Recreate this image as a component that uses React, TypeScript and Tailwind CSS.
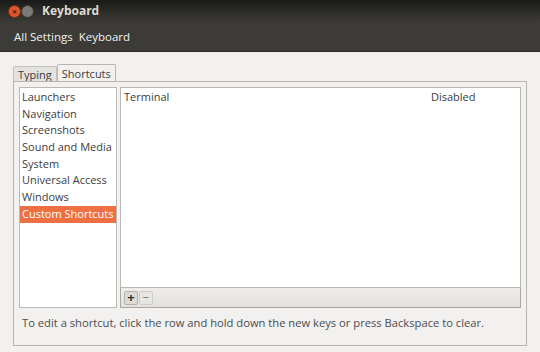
import React, { useState } from 'react';

const categories = [
  'Launchers',
  'Navigation',
  'Screenshots',
  'Sound and Media',
  'System',
  'Universal Access',
  'Windows',
  'Custom Shortcuts',
];

const App: React.FC = () => {
  const [selected, setSelected] = useState('Custom Shortcuts');
  const [tab, setTab] = useState('Shortcuts');

  return (
    <div
      className="w-[540px] h-[352px] overflow-hidden flex flex-col bg-[#f2f1f0] text-[#3c3c3c]"
      style={{ fontFamily: '"Open Sans", "DejaVu Sans", sans-serif' }}
    >
      {/* title bar */}
      <div className="h-[22px] flex items-center bg-gradient-to-b from-[#1a1a18] to-[#3c3b37] px-[8px]">
        <div className="w-[13px] h-[13px] rounded-full bg-[#e0562f] border border-[#7a2a12] flex items-center justify-center text-[9px] leading-none text-[#4a1a0a] font-bold">
          ×
        </div>
        <div className="w-[13px] h-[13px] rounded-full bg-[#7a7975] border border-[#3a3935]" />
        <span className="ml-[8px] text-[12px] font-bold text-[#dfdbd2]">Keyboard</span>
      </div>

      {/* toolbar */}
      <div className="h-[30px] flex items-center gap-[6px] bg-[#3c3b37] px-[14px] text-[11.5px] text-[#f2f1f0] border-b border-[#2c2b28]">
        <span>All Settings</span>
        <span>Keyboard</span>
      </div>

      <div className="flex-1 flex flex-col px-[13px] pt-[12px]">
        {/* tabs */}
        <div className="flex items-end h-[17px] text-[11px]">
          {['Typing', 'Shortcuts'].map((t) => (
            <button
              key={t}
              onClick={() => setTab(t)}
              className={
                tab === t
                  ? 'h-[17px] px-[4px] bg-[#f2f1f0] border border-b-0 border-[#b8b6b1] rounded-t-[2px] leading-[15px]'
                  : 'h-[15px] px-[4px] bg-[#e4e2df] border border-b-0 border-[#c4c2bd] rounded-t-[2px] leading-[13px]'
              }
            >
              {t}
            </button>
          ))}
        </div>

        {/* notebook */}
        <div className="flex-1 border border-[#b8b6b1] bg-[#f2f1f0] flex flex-col px-[5px] pt-[5px]">
          <div className="flex gap-[3px] h-[221px] text-[11px]">
            <div className="w-[98px] bg-white border border-[#bab8b3] pt-[1px]">
              {categories.map((c) => (
                <div
                  key={c}
                  onClick={() => setSelected(c)}
                  className={
                    selected === c
                      ? 'h-[16.7px] leading-[16px] px-[2px] bg-[#ee7042] text-white'
                      : 'h-[16.7px] leading-[16px] px-[2px]'
                  }
                >
                  {c}
                </div>
              ))}
            </div>

            <div className="flex-1 flex flex-col">
              <div className="flex-1 bg-white border border-[#bab8b3] pt-[1px]">
                <div className="flex h-[16.7px] leading-[16px] px-[3px]">
                  <span className="flex-1">Terminal</span>
                  <span className="w-[86px]">Disabled</span>
                </div>
              </div>
              <div className="h-[20px] flex items-center gap-[1px] px-[3px] border border-t-0 border-[#a9a7a2] bg-gradient-to-b from-[#eeedeb] to-[#e3e1de]">
                <button className="w-[14px] h-[14px] flex items-center justify-center text-[13px] leading-none font-bold text-[#2e2e2e] bg-[#dcdad6] border border-[#b4b2ad] rounded-[2px]">
                  +
                </button>
                <button className="w-[14px] h-[14px] flex items-center justify-center text-[12px] leading-none text-[#777] bg-[#e8e6e3] border border-[#cfcdc9] rounded-[2px]">
                  −
                </button>
              </div>
            </div>
          </div>

          <div className="pt-[7px] px-[3px] text-[11.2px] text-[#4c4c4c]">
            To edit a shortcut, click the row and hold down the new keys or press Backspace to clear.
          </div>
        </div>
      </div>
      <div className="h-[6px]" />
    </div>
  );
};

export default App;
